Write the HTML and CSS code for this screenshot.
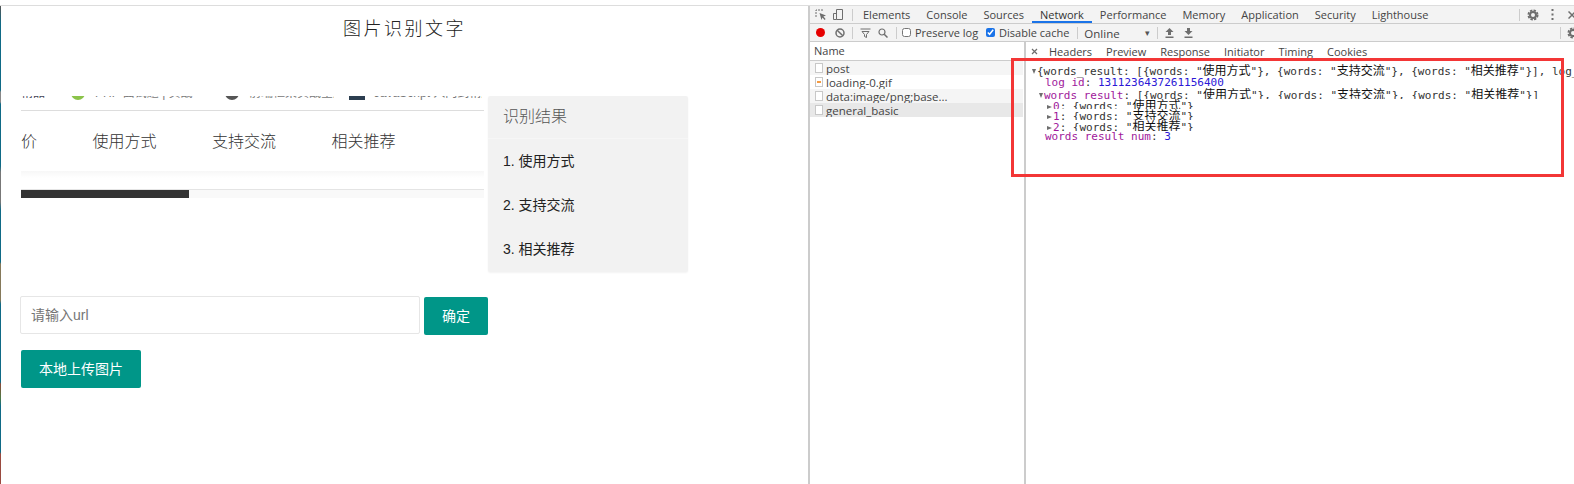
FILE: index.html
```html
<!DOCTYPE html>
<html lang="zh-CN">
<head>
<meta charset="utf-8">
<title>图片识别文字</title>
<link rel="stylesheet" href="styles.css">
</head>
<body>
<div class="topgap"></div>
<div class="main">
  <div class="edge"></div>
  <section class="page">
    <h1 class="title">图片识别文字</h1>
    <div class="content">
      <div class="work">
        <div class="shot">
          <div class="cut">
            <span class="cut-a">精品</span>
            <i class="dot dot-green"></i>
            <span class="cut-b">PHP 面试题 | 实战</span>
            <i class="dot dot-gray"></i>
            <span class="cut-c">前端框架实战全集</span>
            <i class="sq"></i>
            <span class="cut-d">JavaScript 入门到精通教程</span>
          </div>
          <nav class="shot-tabs">
            <span class="shot-first">价</span>
            <span>使用方式</span>
            <span>支持交流</span>
            <span>相关推荐</span>
          </nav>
          <div class="band"></div>
          <div class="bar"><div class="bar-fill"></div></div>
        </div>
        <aside class="card">
          <div class="card-head">识别结果</div>
          <div class="card-item">1. 使用方式</div>
          <div class="card-item">2. 支持交流</div>
          <div class="card-item">3. 相关推荐</div>
        </aside>
      </div>
      <div class="url-row">
        <input class="url" type="text" placeholder="请输入url">
        <button class="btn btn-ok" type="button">确定</button>
      </div>
      <button class="btn btn-up" type="button">本地上传图片</button>
    </div>
  </section>

  <section class="dev">
    <div class="bar1">
      <svg class="ic ic-inspect" width="12" height="12" viewBox="0 0 12 12"><path d="M1 8V1h8" fill="none" stroke="#6e6e6e" stroke-width="1" stroke-dasharray="2 1"/><path d="M4.500 4l6.500 2.600-2.600 1L10.600 10l-.9.900-2.200-2.300-1 2.500z" fill="#6e6e6e"/></svg>
      <svg class="ic ic-device" width="13" height="13" viewBox="0 0 13 13"><path d="M4.500 1.500h6v10h-6zM4.500 5.500H1.500v6h3" fill="none" stroke="#6e6e6e"/></svg>
      <i class="sep sep-a"></i>
      <div class="tabs">
        <span class="tab">Elements</span>
        <span class="tab">Console</span>
        <span class="tab">Sources</span>
        <span class="tab tab-on">Network</span>
        <span class="tab">Performance</span>
        <span class="tab">Memory</span>
        <span class="tab">Application</span>
        <span class="tab">Security</span>
        <span class="tab">Lighthouse</span>
      </div>
      <i class="sep sep-b"></i>
      <svg class="gear gear-a" width="12" height="12" viewBox="0 0 12 12"><circle cx="6" cy="6" r="3" fill="none" stroke="#6e6e6e" stroke-width="2"/><circle cx="6" cy="6" r="4.600" fill="none" stroke="#6e6e6e" stroke-width="1.800" stroke-dasharray="2.400 1.210"/></svg>
      <svg class="dots" width="3" height="11" viewBox="0 0 3 11"><path d="M.5 0h2v2h-2zM.5 4.500h2v2h-2zM.5 9h2v2h-2z" fill="#6e6e6e"/></svg>
      <svg class="close" width="8" height="8" viewBox="0 0 8 8"><path d="M.5.500l7 7M7.500.500l-7 7" stroke="#6e6e6e" stroke-width="1.500"/></svg>
    </div>
    <div class="bar2">
      <i class="rec"></i>
      <svg class="ic-stop" width="10" height="10" viewBox="0 0 10 10"><circle cx="5" cy="5" r="4" fill="none" stroke="#6e6e6e" stroke-width="1.500"/><path d="M2.200 2.200l5.600 5.600" stroke="#6e6e6e" stroke-width="1.500"/></svg>
      <i class="sep sep-c"></i>
      <svg class="ic-filter" width="11" height="10" viewBox="0 0 11 10"><path d="M.5 1h10M2 3.500h7L6.500 6.500v3l-2-1v-2z" fill="none" stroke="#6e6e6e"/></svg>
      <svg class="ic-search" width="10" height="10" viewBox="0 0 10 10"><circle cx="4" cy="4" r="3" fill="none" stroke="#6e6e6e" stroke-width="1.200"/><path d="M6.200 6.200l3.300 3.300" stroke="#6e6e6e" stroke-width="1.500"/></svg>
      <i class="sep sep-d"></i>
      <label class="chk chk-a"><input type="checkbox">Preserve log</label>
      <label class="chk chk-b"><input type="checkbox" checked>Disable cache</label>
      <i class="sep sep-e"></i>
      <span class="throttle">Online</span>
      <span class="caret">▾</span>
      <i class="sep sep-f"></i>
      <svg class="ic-up" width="9" height="10" viewBox="0 0 9 10"><path d="M4.500 0L8.500 4H6V7H3V4H.5zM.5 8.500h8V10h-8z" fill="#6e6e6e"/></svg>
      <svg class="ic-down" width="9" height="10" viewBox="0 0 9 10"><path d="M3 0h3v3h2.500L4.500 7 .5 3H3zM.5 8.500h8V10h-8z" fill="#6e6e6e"/></svg>
      <i class="sep sep-g"></i>
      <svg class="gear gear-b" width="12" height="12" viewBox="0 0 12 12"><circle cx="6" cy="6" r="3" fill="none" stroke="#6e6e6e" stroke-width="2"/><circle cx="6" cy="6" r="4.600" fill="none" stroke="#6e6e6e" stroke-width="1.800" stroke-dasharray="2.400 1.210"/></svg>
    </div>
    <div class="split">
      <div class="names">
        <div class="names-head">Name</div>
        <div class="req req-odd"><i class="file"></i><span>post</span></div>
        <div class="req"><i class="file file-gif"></i><span>loading-0.gif</span></div>
        <div class="req req-odd"><i class="file"></i><span>data:image/png;base...</span></div>
        <div class="req req-sel"><i class="file"></i><span>general_basic</span></div>
      </div>
      <div class="detail">
        <div class="detail-head">
          <svg class="detail-x" width="7" height="7" viewBox="0 0 7 7"><path d="M1 1l5 5M6 1l-5 5" stroke="#6e6e6e" stroke-width="1.200"/></svg>
          <span class="dtab">Headers</span>
          <span class="dtab">Preview</span>
          <span class="dtab">Response</span>
          <span class="dtab">Initiator</span>
          <span class="dtab">Timing</span>
          <span class="dtab">Cookies</span>
        </div>
        <div class="json">
          <div class="ln ln-first l0"><i class="tri tri-open"></i>{words_result: [{words: "<b>使用方式</b>"}, {words: "<b>支持交流</b>"}, {words: "<b>相关推荐</b>"}], log_id: 1311236437261156400, words_result_num: 3}</div>
          <div class="ln l1"><em>log_id</em>: <u>1311236437261156400</u></div>
          <div class="ln l1"><i class="tri tri-open"></i><em>words_result</em>: [{words: "<b>使用方式</b>"}, {words: "<b>支持交流</b>"}, {words: "<b>相关推荐</b>"}]</div>
          <div class="ln l2"><i class="tri"></i><em>0</em>: {words: "<b>使用方式</b>"}</div>
          <div class="ln l2"><i class="tri"></i><em>1</em>: {words: "<b>支持交流</b>"}</div>
          <div class="ln l2"><i class="tri"></i><em>2</em>: {words: "<b>相关推荐</b>"}</div>
          <div class="ln l1"><em>words_result_num</em>: <u>3</u></div>
        </div>
      </div>
    </div>
    <div class="mark"></div>
  </section>
</div>
</body>
</html>
```
FILE: styles.css
```css
* { box-sizing: border-box; }
html, body { margin: 0; padding: 0; }
body {
  width: 1574px;
  height: 484px;
  overflow: hidden;
  background: #fff;
  font-family: "Liberation Sans", "Noto Sans CJK SC", sans-serif;
  color: #333;
}
.topgap { height: 6px; border-bottom: 1px solid #ddd; }
.main { display: flex; height: 478px; }
.edge {
  width: 1px;
  flex: none;
  background: linear-gradient(#555 0, #0f6a86 18px, #0f6a86 84px, #888 86px, #888 96px, #0f6a86 98px, #0f6a86 160px, #777 166px, #777 196px, #0f6a86 204px, #0f6a86 256px, #85795a 258px, #85795a 294px, #0f6a86 298px, #0f6a86 376px, #8a4a3a 378px, #4d7a45 392px, #0f6a86 400px, #0f6a86 446px, #9a4a3f 448px, #9a4a3f 478px);
}

/* page under test */
.page { width: 809px; flex: none; border-right: 2px solid #ccc; }
.title {
  margin: 0;
  height: 90px;
  padding-top: 8px;
  text-align: center;
  font-family: "Noto Sans CJK SC", sans-serif;
  font-size: 18px;
  line-height: 26px;
  font-weight: 300;
  letter-spacing: 2.500px;
  color: #222;
}
.content { padding-left: 20px; }
.work { display: flex; align-items: flex-start; gap: 4px; }
.shot { width: 463px; height: 102px; flex: none; }
.cut {
  display: flex;
  align-items: flex-end;
  height: 15px;
  overflow: hidden;
  border-bottom: 1px solid #ddd;
  padding-bottom: 10px;
  font-size: 12px;
  line-height: 14px;
  color: #777;
  white-space: nowrap;
}
.cut-a { width: 50px; flex: none; color: #445; }
.dot { flex: none; display: block; border-radius: 50%; width: 14px; height: 14px; }
.dot-green { background: #8bc34a; margin-right: 10px; }
.dot-gray { background: #555; margin-right: 10px; margin-left: 25px; }
.cut-b { width: 105px; flex: none; overflow: hidden; }
.cut-c { width: 85px; flex: none; overflow: hidden; }
.sq { flex: none; display: block; width: 16px; height: 14px; background: #2c3e50; margin-left: 15px; margin-right: 9px; }
.cut-d { width: 108px; flex: none; overflow: hidden; }
.shot-tabs {
  display: flex;
  gap: 55.500px;
  height: 60px;
  font-size: 16px;
  line-height: 58px;
  font-family: "Noto Sans CJK SC", sans-serif;
  font-weight: 300;
}
.shot-first { width: 16px; }
.band { height: 7px; background: linear-gradient(#f7f7f7, #fff); }
.bar {
  height: 9px;
  margin-top: 11px;
  background: #f9f9f9;
  border-top: 1px solid #e4e4e4;
}
.bar-fill { width: 168px; height: 8px; background: #333; }
.card {
  width: 200px;
  height: 176px;
  flex: none;
  background: #f2f2f2;
  border-radius: 2px;
  box-shadow: 0 1px 2px rgba(0, 0, 0, .05);
  font-family: "Liberation Sans", "Noto Sans CJK SC", sans-serif;
}
.card-head {
  height: 43px;
  padding-left: 15px;
  border-bottom: 1px solid #f6f6f6;
  font-size: 16px;
  line-height: 41px;
  color: #555;
  font-weight: 300;
}
.card-item {
  height: 44px;
  padding-left: 15px;
  font-size: 14px;
  line-height: 44px;
  color: #222;
}
.url-row { display: flex; align-items: flex-start; margin-top: 24px; margin-left: -1px; }
.url {
  width: 400px;
  height: 38px;
  padding: 0 10px;
  border: 1px solid #e6e6e6;
  border-radius: 2px;
  background: #fff;
  font: 14px/36px "Liberation Sans", "Noto Sans CJK SC", sans-serif;
  outline: none;
}
.url::placeholder { color: #757575; opacity: 1; }
.btn {
  display: block;
  height: 38px;
  padding: 0;
  border: 0;
  border-radius: 2px;
  background: #009688;
  color: #fff;
  font: 14px/38px "Liberation Sans", "Noto Sans CJK SC", sans-serif;
}
.btn-ok { width: 64px; margin: 1px 0 0 4px; }
.btn-up { width: 120px; margin-top: 15px; }

/* devtools */
.dev {
  position: relative;
  flex: 1;
  min-width: 0;
  overflow: hidden;
  font-family: "Open Sans", sans-serif;
  font-size: 11px;
  color: #444;
}
.bar1, .bar2 {
  display: flex;
  align-items: center;
  background: #f3f3f3;
  border-bottom: 1px solid #ccc;
  white-space: nowrap;
}
.bar1 { height: 18px; }
.bar2 { height: 18px; }
.sep { flex: none; display: block; width: 1px; height: 12px; background: #ccc; }
.ic { flex: none; display: block; }
.ic-inspect { margin-left: 5px; }
.ic-device { margin-left: 5px; }
.sep-a { margin-left: 7px; }
.tabs { display: flex; align-items: stretch; height: 17px; margin-left: 2px; }
.tab {
  padding: 0 8px;
  line-height: 17px;
  height: 17px;
  overflow: hidden;
}
.tab-on { box-shadow: inset 0 -2px 0 #1a73e8; color: #333; }
.sep-b { margin-left: 83px; }
.gear { flex: none; display: block; }
.gear-a { margin-left: 7px; }
.dots { flex: none; margin-left: 12px; }
.close { flex: none; margin-left: 14px; }
.rec { flex: none; display: block; width: 9px; height: 9px; border-radius: 50%; background: #e60000; margin-left: 6px; }
.ic-stop { flex: none; margin-left: 10px; }
.sep-c { margin-left: 7px; }
.ic-filter { flex: none; margin-left: 7px; }
.ic-search { flex: none; margin-left: 7px; }
.sep-d { margin-left: 8px; }
.chk { display: flex; align-items: center; gap: 4px; line-height: 17px; }
.chk input { width: 9px; height: 9px; margin: 0; accent-color: #1a73e8; }
.chk-a { margin-left: 5px; }
.chk-b { margin-left: 8px; }
.sep-e { margin-left: 8px; }
.throttle { margin-left: 6px; width: 61px; flex: none; font-size: 11.500px; padding-top: 2px; }
.caret { flex: none; width: 10px; font-size: 9px; color: #555; }
.sep-f { margin-left: 2px; }
.ic-up { flex: none; margin-left: 7px; }
.ic-down { flex: none; margin-left: 10px; }
.sep-g { margin-left: 367px; }
.gear-b { margin-left: 6px; }
.split { display: flex; height: 442px; }
.names { width: 216px; flex: none; border-right: 2px solid #ccc; }
.names-head {
  height: 19px;
  padding-left: 4px;
  border-bottom: 1px solid #ccc;
  line-height: 18px;
}
.req {
  display: flex;
  align-items: center;
  height: 14px;
  overflow: hidden;
  padding-left: 5px;
  font-size: 11.500px;
  line-height: 16px;
  margin-right: 1px;
}
.req span { height: 14px; }
.req-odd { background: #f5f5f5; }
.req-sel { background: #e8e8e8; }
.file {
  flex: none;
  display: block;
  width: 8px;
  height: 10px;
  margin-right: 3px;
  background: #fff;
  border: 1px solid #c8c8c8;
}
.file-gif { background: linear-gradient(#f59b42, #f59b42) center / 4px 2px no-repeat #fff; }
.detail { flex: 1; min-width: 0; }
.detail-head {
  display: flex;
  align-items: center;
  height: 19px;
  padding-left: 5px;
  white-space: nowrap;
  line-height: 20px;
}
.detail-x { flex: none; margin-right: 4px; }
.dtab { padding: 0 7px; }
.json {
  padding-top: 3px;
  font-family: "DejaVu Sans Mono", monospace;
  font-size: 11px;
  color: #333;
}
.ln { height: 10.800px; line-height: 11px; overflow: hidden; white-space: pre; }
.ln-first { height: 14px; line-height: 11px; margin-bottom: -1px; }
.ln b { font: 400 12px/1 "Noto Sans CJK SC", sans-serif; color: #111; }
.ln em { font-style: normal; color: #a0189b; }
.ln u { text-decoration: none; color: #2b18d6; }
.l0 { padding-left: 12px; }
.l1 { padding-left: 19px; }
.l2 { padding-left: 27px; }
.tri {
  display: inline-block;
  width: 0;
  height: 0;
  margin-left: -6px;
  margin-right: 1px;
  vertical-align: 1px;
  border-top: 2.500px solid transparent;
  border-bottom: 2.500px solid transparent;
  border-left: 5px solid #6e6e6e;
}
.tri-open {
  border-left: 2.500px solid transparent;
  border-right: 2.500px solid transparent;
  border-top: 5px solid #6e6e6e;
  border-bottom: 0;
}
.mark {
  position: absolute;
  left: 201px;
  top: 52px;
  width: 553px;
  height: 119px;
  border: 3px solid #f33636;
}
```
